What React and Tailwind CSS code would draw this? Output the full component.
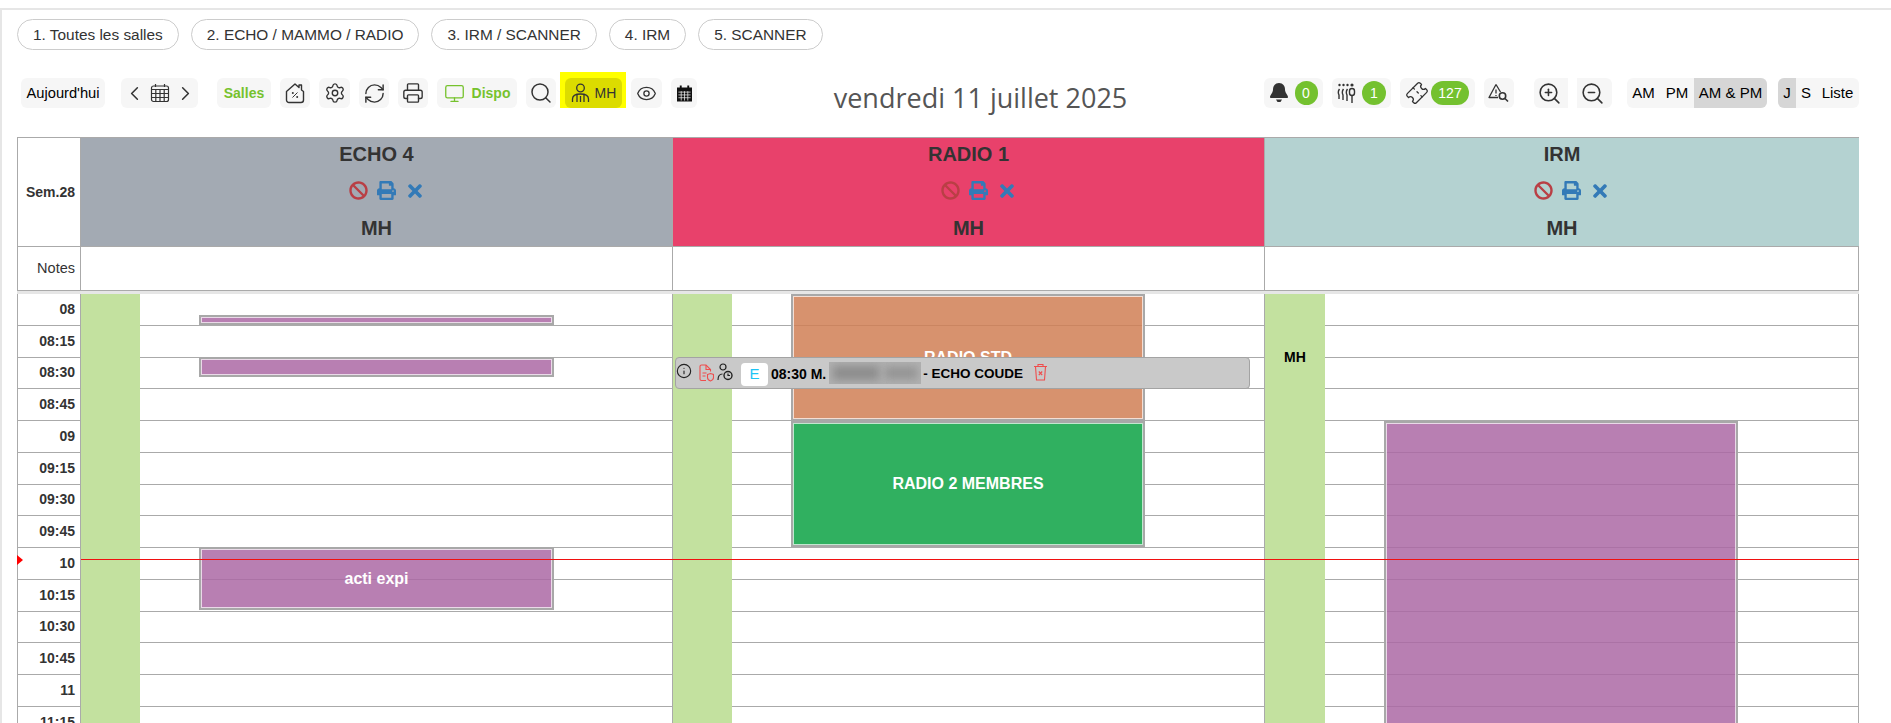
import React from 'react';
import {
  ChevronLeft, ChevronRight, Settings, RefreshCw, Printer, Monitor, Search, Eye,
  ZoomIn, ZoomOut, Info, Ticket,
} from 'lucide-react';
import { FaBan, FaPrint, FaTimes } from 'react-icons/fa';

const pills = ['1. Toutes les salles', '2. ECHO / MAMMO / RADIO', '3. IRM / SCANNER', '4. IRM', '5. SCANNER'];
const times = ['08', '08:15', '08:30', '08:45', '09', '09:15', '09:30', '09:45', '10', '10:15', '10:30', '10:45', '11', '11:15'];

const Btn = ({ className = '', children }) => (
  <div className={`h-[30px] flex items-center justify-center bg-[#f6f6f6] rounded-md ${className}`}>{children}</div>
);

const CalGrid = () => (
  <svg width="20" height="20" viewBox="0 0 20 20" fill="none" stroke="#333" strokeWidth="1.2">
    <rect x="1.5" y="3" width="17" height="15.5" rx="2" />
    <path d="M5.5 1v3M14.5 1v3M1.5 6.5h17M1.5 10.5h17M1.5 14.5h17M5.8 6.5v12M10 6.5v12M14.2 6.5v12" />
  </svg>
);

const HousePercent = () => (
  <svg width="20" height="22" viewBox="0 0 20 22" fill="none" stroke="#333" strokeWidth="1.4">
    <path d="M1.5 9.5 10 2l4 3.5V3h2.5v5l2 1.5V18a2.5 2.5 0 0 1-2.5 2.5H4A2.5 2.5 0 0 1 1.5 18z" strokeLinejoin="round" />
    <path d="M7.5 15.5l5-5" strokeWidth="1" />
    <circle cx="7.8" cy="11" r="1" fill="#333" stroke="none" />
    <circle cx="12.2" cy="15" r="1" fill="#333" stroke="none" />
  </svg>
);

const Doctor = () => (
  <svg width="19" height="20" viewBox="0 0 19 20" fill="none" stroke="#333" strokeWidth="1.3">
    <circle cx="9.5" cy="5" r="3.8" />
    <path d="M1.5 19v-3c0-3 3-5 8-5s8 2 8 5v3" />
    <path d="M6 11.5V19M13 11.5V19M9.5 13v6" />
  </svg>
);

const CalFilled = () => (
  <svg width="15" height="17" viewBox="0 0 16 17">
    <path d="M3 0h2v2h6V0h2v2h3v15H0V2h3z" fill="#111" />
    <path d="M1.5 7h13M1.5 10h13M1.5 13h13M4.5 6v10M8 6v10M11.5 6v10" stroke="#eee" strokeWidth="0.8" />
  </svg>
);

const BellFilled = () => (
  <svg width="18" height="20" viewBox="0 0 18 20">
    <path d="M9 0c4 0 6 3 6 6.5 0 3.5 3 5.5 3 7.5 0 .7-.5 1-1 1H1c-.5 0-1-.3-1-1 0-2 3-4 3-7.5C3 3 5 0 9 0z" fill="#333" />
    <path d="M6 16.5h6L10.5 19h-3z" fill="#333" />
  </svg>
);

const Queue = () => (
  <svg width="20" height="20" viewBox="0 0 20 20" fill="none" stroke="#333" strokeWidth="1.4">
    <circle cx="2.5" cy="2" r="1.2" fill="#333" stroke="none" />
    <circle cx="6.5" cy="2" r="1.2" fill="#333" stroke="none" />
    <circle cx="10.5" cy="2" r="1.2" fill="#333" stroke="none" />
    <circle cx="15" cy="2" r="1.6" fill="#333" stroke="none" />
    <path d="M2.5 6C1 8 1 10 2 12v4M6.5 6C5 8 5 10 6 12v5M10.5 6C9 8 9 10 10 12v6" />
    <rect x="12.5" y="5.5" width="5" height="7" rx="2.5" />
    <path d="M15 12.5V20" />
  </svg>
);

const WarnSearch = () => (
  <svg width="22" height="20" viewBox="0 0 22 20" fill="none" stroke="#333" strokeWidth="1.3">
    <path d="M8 1.5 1 14.5h9M8 1.5l4.5 7.5" strokeLinejoin="round" />
    <path d="M8 6.5v4M8 12v1" />
    <circle cx="14.5" cy="13" r="3.2" strokeWidth="1.6" />
    <path d="m17 15.5 3 3" strokeWidth="1.6" />
  </svg>
);

const DocShield = () => (
  <svg width="15" height="18" viewBox="0 0 15 18" fill="none" stroke="#ef4d4d" strokeWidth="1.1">
    <path d="M7 16.5H2.5A1.5 1.5 0 0 1 1 15V2.5A1.5 1.5 0 0 1 2.5 1H7l4.5 4.5v2" />
    <path d="M7 1v4.5h4.5M3.5 9h4M3.5 12h3" />
    <path d="M8.5 10.5l3-1 3 1v3c0 2-1.5 3-3 3.5-1.5-.5-3-1.5-3-3.5z" />
  </svg>
);

const PersonClock = () => (
  <svg width="16" height="18" viewBox="0 0 16 18" fill="none" stroke="#222" strokeWidth="1.2">
    <circle cx="6" cy="4" r="3" />
    <path d="M1 17c0-3 1-6 4.5-6" />
    <circle cx="11" cy="12.5" r="4" strokeWidth="1.4" />
    <path d="M11 10.5v2h2" />
  </svg>
);

const TrashX = () => (
  <svg width="15" height="18" viewBox="0 0 15 18" fill="none" stroke="#ef4d4d" strokeWidth="1.1">
    <path d="M1 3.5h13M5 3.5v-2h5v2M2.5 3.5l1 13.5h8l1-13.5" />
    <path d="m5.8 8.5 3.4 3.5M9.2 8.5l-3.4 3.5" />
  </svg>
);

const Badge = ({ children, className = '' }) => (
  <span className={`h-[24px] rounded-full bg-[#74c12f] text-white text-[14px] flex items-center justify-center ${className}`}>{children}</span>
);

const Event = ({ className = '', color, children }) => (
  <div className={`absolute border-2 border-[#a8a8a8] ring-1 ring-inset ring-white/70 flex items-center justify-center text-white font-bold text-[16px] ${color} ${className}`}>
    {children}
  </div>
);

const Rows = () => times.map((t) => <div key={t} className="h-[31.75px] border-b border-[#aaaaaa]" />);

const HeaderCell = ({ name, color, last, ban = 'text-[#b93f45]' }) => (
  <div className={`${last ? 'flex-1' : 'w-[592px] border-r border-[#aaaaaa]'} h-full flex flex-col items-center text-[#333] font-bold text-[20px] ${color}`}>
    <div className="h-[33px] flex items-center">{name}</div>
    <div className="h-[40px] flex items-center gap-[9px] ml-[20px]">
      <FaBan className={`${ban} text-[19px]`} />
      <FaPrint className="text-[#337ab7] text-[19px]" />
      <FaTimes className="text-[#337ab7] text-[20px]" />
    </div>
    <div className="h-[36px] flex items-center">MH</div>
  </div>
);

const App = () => {
  return (
    <div className="h-[723px] overflow-hidden bg-white font-['Liberation_Sans',Arial,sans-serif] text-[#333]">
      <div className="h-2" />
      <div className="h-[715px] border-t-2 border-l-2 border-[#e6e6e6] pl-[15px]">
        <div className="flex gap-3 pt-[9px]">
          {pills.map((p) => (
            <div key={p} className="h-[31px] px-[15px] flex items-center rounded-full border border-[#cccccc] text-[15.4px] text-[#333] whitespace-nowrap">{p}</div>
          ))}
        </div>

        <div className="flex items-center mt-[28px] h-[30px] w-[1842px] pl-1 relative">
          <div className="flex items-center">
            <Btn className="w-[84px] text-[14.7px] text-black">Aujourd'hui</Btn>
            <Btn className="w-[77px] ml-4 gap-[4px]">
              <ChevronLeft size={23} strokeWidth={1.6} />
              <CalGrid />
              <ChevronRight size={23} strokeWidth={1.6} />
            </Btn>
            <Btn className="w-[54px] ml-[19px] text-[14px] font-bold text-[#76c22d]">Salles</Btn>
            <Btn className="w-[30px] ml-[9px]"><HousePercent /></Btn>
            <Btn className="w-[31px] ml-[9px]"><Settings size={22} strokeWidth={1.5} /></Btn>
            <Btn className="w-[30px] ml-[9px]"><RefreshCw size={23} strokeWidth={1.5} /></Btn>
            <Btn className="w-[30px] ml-[9px]"><Printer size={22} strokeWidth={1.5} /></Btn>
            <Btn className="w-[80px] ml-[9px] gap-[7px] text-[14px] font-bold text-[#76c22d]">
              <Monitor size={21} strokeWidth={1.5} className="text-[#76c22d]" />Dispo
            </Btn>
            <Btn className="w-[30px] ml-[9px]"><Search size={24} strokeWidth={1.5} /></Btn>
            <div className="ml-1 p-[5px] pt-[6px] pb-0 bg-[#ffff00] h-[36px] -mt-[6px] w-[66px]">
              <div className="w-[57px] h-[30px] rounded-md bg-[#dcdc00] flex items-center justify-center gap-[5px] text-[14px]">
                <Doctor />MH
              </div>
            </div>
            <Btn className="w-[31px] ml-[5px]"><Eye size={21} strokeWidth={1.5} /></Btn>
            <Btn className="w-[26px] ml-[9px]"><CalFilled /></Btn>
          </div>

          <div className="flex-1 pt-[8px] text-center font-['Open_Sans',sans-serif] text-[27px] leading-none text-[#555] whitespace-nowrap">vendredi 11 juillet 2025</div>

          <div className="flex items-center">
            <Btn className="w-[59px] gap-[7px]"><BellFilled /><Badge className="w-[23px]">0</Badge></Btn>
            <Btn className="w-[59px] ml-[9px] gap-[5px]"><Queue /><Badge className="w-[24px]">1</Badge></Btn>
            <Btn className="w-[75px] ml-[9px] gap-[3px]"><Ticket size={22} strokeWidth={1.4} className="rotate-[-45deg]" /><Badge className="w-[38px]">127</Badge></Btn>
            <Btn className="w-[30px] ml-[9px]"><WarnSearch /></Btn>
            <Btn className="w-[34px] ml-[20px] pr-[4px] rounded-r-none"><ZoomIn size={25} strokeWidth={1.5} /></Btn>
            <Btn className="w-[35px] ml-[9px] pr-[4px] rounded-l-none"><ZoomOut size={25} strokeWidth={1.5} /></Btn>
            <Btn className="w-[140px] ml-[15px] text-[15px] text-black overflow-hidden justify-start">
              <span className="w-[33px] text-center">AM</span>
              <span className="w-[34px] text-center">PM</span>
              <span className="flex-1 h-full bg-[#d6d6d6] flex items-center justify-center">AM &amp; PM</span>
            </Btn>
            <Btn className="w-[81px] ml-[11px] text-[15px] text-black overflow-hidden justify-start">
              <span className="w-[18px] h-full bg-[#d6d6d6] flex items-center justify-center">J</span>
              <span className="w-[20px] text-center">S</span>
              <span className="flex-1 text-center">Liste</span>
            </Btn>
          </div>
        </div>

        <div className="mt-[29px] w-[1842px] relative">
          <div className="flex h-[109px] border-t border-[#aaaaaa]">
            <div className="w-[64px] border-l border-r border-[#aaaaaa] flex items-center justify-end pr-[5px] font-bold text-[14px]">Sem.28</div>
            <HeaderCell name="ECHO 4" color="bg-[#a3aab3]" />
            <HeaderCell name="RADIO 1" color="bg-[#e8416b]" />
            <HeaderCell name="IRM" color="bg-[#b4d2d1]" last />
          </div>
          <div className="flex h-[45px] border-y border-[#aaaaaa]">
            <div className="w-[64px] border-l border-r border-[#aaaaaa] flex items-center justify-end pr-[5px] text-[14.5px]">Notes</div>
            <div className="w-[592px] border-r border-[#aaaaaa]" />
            <div className="w-[592px] border-r border-[#aaaaaa]" />
            <div className="flex-1 border-r border-[#aaaaaa]" />
          </div>
          <div className="h-[3px] bg-[#e6e6e6]" />

          <div className="flex relative">
            <div className="w-[64px] border-l border-r border-[#aaaaaa] shrink-0">
              {times.map((t) => (
                <div key={t} className="h-[31.75px] border-b border-[#aaaaaa] flex items-center justify-end pr-[5px] font-bold text-[14px]">{t}</div>
              ))}
            </div>

            <div className="w-[592px] border-r border-[#aaaaaa] relative shrink-0">
              <Rows />
              <div className="absolute top-0 bottom-0 left-0 w-[59px] bg-[#c3e19f]" />
              <Event color="bg-[#ab69a4]/85" className="left-[118px] w-[355px] top-[21px] h-[10px]" />
              <Event color="bg-[#ab69a4]/85" className="left-[118px] w-[355px] top-[63px] h-[20px]" />
              <Event color="bg-[#ab69a4]/85" className="left-[118px] w-[355px] top-[253px] h-[63px]">acti expi</Event>
            </div>

            <div className="w-[592px] border-r border-[#aaaaaa] relative shrink-0">
              <Rows />
              <div className="absolute top-0 bottom-0 left-0 w-[59px] bg-[#c3e19f]" />
              <Event color="bg-[#d07f55]/85" className="left-[118px] w-[354px] top-0 h-[127px]">RADIO STD</Event>
              <Event color="bg-[#30b060]" className="left-[118px] w-[354px] top-[127px] h-[126px]">RADIO 2 MEMBRES</Event>
            </div>

            <div className="flex-1 border-r border-[#aaaaaa] relative">
              <Rows />
              <div className="absolute top-0 bottom-0 left-0 w-[60px] bg-[#c3e19f] flex justify-center pt-[53px] text-black font-bold text-[14px]">MH</div>
              <Event color="bg-[#ab69a4]/85" className="left-[119px] w-[354px] top-[127px] h-[400px]" />
            </div>

            <div className="absolute left-0 top-[261px] w-0 h-0 border-y-[5px] border-y-transparent border-l-[6px] border-l-[#ff0000]" />
            <div className="absolute left-[64px] right-0 top-[265px] h-px bg-[#f01010]" />

            <div className="absolute left-[658px] top-[63px] w-[575px] h-[32px] rounded bg-[#c9c9c9] border border-[#a3a3a3] flex items-center text-black font-bold text-[14px] whitespace-nowrap">
              <Info size={16} strokeWidth={1.7} className="text-[#222] -mt-[4px]" />
              <div className="ml-[7px]"><DocShield /></div>
              <div className="ml-[3px] -mt-[3px]"><PersonClock /></div>
              <div className="ml-[8px] w-[27px] h-[23px] mt-[3px] rounded-[4px] bg-white text-[#1cc4f5] font-normal text-[15px] flex items-center justify-center">E</div>
              <span className="ml-[3px] pt-[2px]">08:30 M.</span>
              <div className="ml-[3px] w-[92px] h-[22px] overflow-hidden bg-[#b0b0b0] relative">
                <div className="absolute left-[4px] top-[4px] w-[46px] h-[14px] bg-[#8c8c8c] blur-[4px]" />
                <div className="absolute left-[56px] top-[5px] w-[32px] h-[12px] bg-[#939393] blur-[4px]" />
              </div>
              <span className="ml-[2px] pt-[2px] text-[13.5px]">- ECHO COUDE</span>
              <div className="ml-[10px] -mt-[3px]"><TrashX /></div>
            </div>
          </div>
        </div>
      </div>
    </div>
  );
};

export default App;
